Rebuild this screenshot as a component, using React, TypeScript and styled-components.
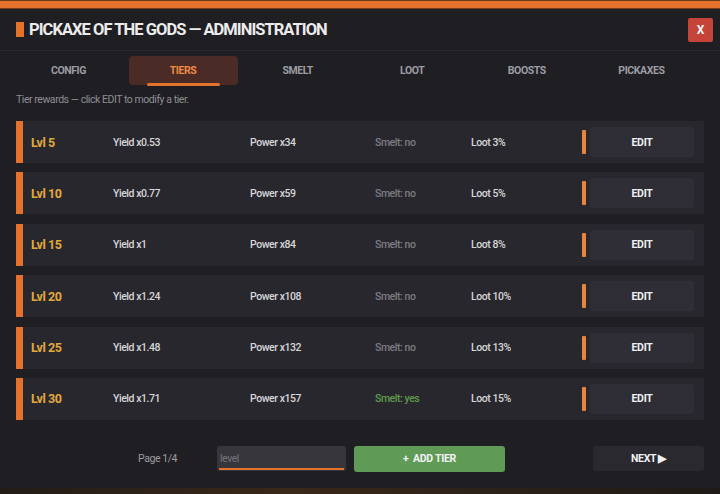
import React, { useState } from 'react';
import styled, { createGlobalStyle } from 'styled-components';

const GlobalStyle = createGlobalStyle`
  html, body {
    margin: 0;
    padding: 0;
    background: #2a2119;
  }
  body {
    font-family: Roboto, "Liberation Sans", sans-serif;
    letter-spacing: -0.45px;
    -webkit-font-smoothing: antialiased;
  }
`;

const ORANGE = '#e2722c';

const Modal = styled.div`
  width: 720px;
  height: 488px;
  background-color: #1f1e23;
  display: flex;
  flex-direction: column;
  overflow: hidden;
`;

const TopBar = styled.div`
  height: 9px;
  background-color: ${ORANGE};
  box-shadow: inset 0 1px 0 #6b3a1c, inset 0 -1px 0 #7a3d18;
`;

const Header = styled.div`
  height: 41px;
  display: flex;
  align-items: center;
  justify-content: space-between;
  padding: 0 7px 0 16px;
  border-bottom: 1px solid #2c2b31;
`;

const Title = styled.h1`
  margin: 0;
  display: flex;
  align-items: center;
  gap: 5px;
  font-size: 16.5px;
  font-weight: 700;
  color: #ececec;
  letter-spacing: -0.95px;
  &::before {
    content: '';
    width: 8px;
    height: 15px;
    background-color: ${ORANGE};
  }
`;

const CloseButton = styled.button`
  width: 25px;
  height: 24px;
  border: none;
  border-radius: 2px;
  background-color: #c4443a;
  color: #f4f4f4;
  font-family: inherit;
  font-size: 12px;
  font-weight: 700;
  padding: 0;
  cursor: pointer;
`;

const Tabs = styled.nav`
  display: flex;
  gap: 5.6px;
  padding: 0 24px 0 14px;
  margin-top: 5px;
  height: 29px;
`;

const Tab = styled.button<{ $active?: boolean }>`
  flex: 1;
  position: relative;
  border: none;
  border-radius: 4px;
  background-color: ${(p) => (p.$active ? '#4a2b25' : 'transparent')};
  color: ${(p) => (p.$active ? '#ee8a45' : '#9c9ca2')};
  font-family: inherit;
  font-size: 10.5px;
  font-weight: 700;
  letter-spacing: -0.4px;
  padding: 0;
  cursor: pointer;
  &::after {
    content: '';
    display: ${(p) => (p.$active ? 'block' : 'none')};
    position: absolute;
    left: 50%;
    bottom: -1px;
    width: 73px;
    height: 3px;
    margin-left: -36.5px;
    border-radius: 2px;
    background-color: ${ORANGE};
  }
`;

const Hint = styled.p`
  margin: 8px 0 0 16px;
  line-height: 14px;
  font-size: 10.5px;
  color: #8e8e94;
`;

const TierList = styled.div`
  margin-top: 14px;
  display: flex;
  flex-direction: column;
  gap: 9.4px;
  padding: 0 16px;
`;

const TierRow = styled.div`
  height: 42px;
  display: grid;
  grid-template-columns: 82px 137px 125px 96px 1fr 8px 104px;
  align-items: center;
  padding: 0 10px 0 8px;
  background-color: #28272d;
  border-left: 7px solid ${ORANGE};
  box-sizing: border-box;
  font-size: 10.5px;
  font-weight: 500;
  color: #d6d6d8;
`;

const Level = styled.span`
  font-size: 12.5px;
  font-weight: 700;
  color: #e2a83e;
`;

const Cell = styled.span``;

const SmeltCell = styled.span<{ $yes: boolean }>`
  color: ${(p) => (p.$yes ? '#5e9b4c' : '#7c7c82')};
`;

const EditMark = styled.span`
  width: 3.5px;
  height: 24px;
  border-radius: 1px;
  background-color: #e8843c;
`;

const EditButton = styled.button`
  width: 104px;
  height: 30px;
  border: none;
  border-radius: 3px;
  background-color: #2f2e36;
  color: #f0f0f0;
  font-family: inherit;
  font-size: 10.5px;
  font-weight: 700;
  letter-spacing: -0.3px;
  cursor: pointer;
`;

const Footer = styled.div`
  margin-top: 26px;
  display: flex;
  align-items: center;
  padding: 0 16px;
  height: 26px;
`;

const PageLabel = styled.span`
  width: 161px;
  text-align: right;
  font-size: 10.5px;
  color: #9c9ca2;
`;

const LevelInput = styled.input`
  margin-left: 40px;
  width: 129px;
  height: 25px;
  box-sizing: border-box;
  border: none;
  border-radius: 3px;
  padding: 0 4px 0 3px;
  background-color: #37363d;
  background-image: linear-gradient(${ORANGE}, ${ORANGE});
  background-repeat: no-repeat;
  background-size: calc(100% - 4px) 2px;
  background-position: 2px calc(100% - 1px);
  color: #dddddd;
  font-family: inherit;
  font-size: 10.5px;
  letter-spacing: -0.45px;
  outline: none;
  &::placeholder {
    color: #75757b;
  }
`;

const AddButton = styled.button`
  margin-left: 8px;
  width: 151px;
  height: 26px;
  border: none;
  border-radius: 3px;
  background-color: #5f9b57;
  color: #f2f2f2;
  font-family: inherit;
  font-size: 10.5px;
  font-weight: 700;
  letter-spacing: -0.3px;
  cursor: pointer;
`;

const NextButton = styled.button`
  margin-left: auto;
  width: 111px;
  height: 25px;
  border: none;
  border-radius: 3px;
  background-color: #2a2930;
  color: #f0f0f0;
  font-family: inherit;
  font-size: 10.5px;
  font-weight: 700;
  letter-spacing: -0.3px;
  cursor: pointer;
`;

const Backdrop = styled.div`
  height: 6px;
  background: linear-gradient(90deg, #221c17, #3a2818 40%, #2b2118 70%, #1f1a16);
`;

const tabs = ['CONFIG', 'TIERS', 'SMELT', 'LOOT', 'BOOSTS', 'PICKAXES'];

const tiers = [
  { lvl: 5, yieldX: '0.53', power: 34, smelt: false, loot: 3 },
  { lvl: 10, yieldX: '0.77', power: 59, smelt: false, loot: 5 },
  { lvl: 15, yieldX: '1', power: 84, smelt: false, loot: 8 },
  { lvl: 20, yieldX: '1.24', power: 108, smelt: false, loot: 10 },
  { lvl: 25, yieldX: '1.48', power: 132, smelt: false, loot: 13 },
  { lvl: 30, yieldX: '1.71', power: 157, smelt: true, loot: 15 },
];

const App = () => {
  const [activeTab, setActiveTab] = useState('TIERS');
  const [level, setLevel] = useState('');

  return (
    <>
      <GlobalStyle />
      <Modal>
        <TopBar />
        <Header>
          <Title>PICKAXE OF THE GODS — ADMINISTRATION</Title>
          <CloseButton>X</CloseButton>
        </Header>
        <Tabs>
          {tabs.map((t) => (
            <Tab key={t} $active={t === activeTab} onClick={() => setActiveTab(t)}>
              {t}
            </Tab>
          ))}
        </Tabs>
        <Hint>Tier rewards — click EDIT to modify a tier.</Hint>
        <TierList>
          {tiers.map((tier) => (
            <TierRow key={tier.lvl}>
              <Level>Lvl {tier.lvl}</Level>
              <Cell>Yield x{tier.yieldX}</Cell>
              <Cell>Power x{tier.power}</Cell>
              <SmeltCell $yes={tier.smelt}>Smelt: {tier.smelt ? 'yes' : 'no'}</SmeltCell>
              <Cell>Loot {tier.loot}%</Cell>
              <EditMark />
              <EditButton>EDIT</EditButton>
            </TierRow>
          ))}
        </TierList>
        <Footer>
          <PageLabel>Page 1/4</PageLabel>
          <LevelInput placeholder="level" value={level} onChange={(e) => setLevel(e.target.value)} />
          <AddButton>+&nbsp; ADD TIER</AddButton>
          <NextButton>NEXT ▶</NextButton>
        </Footer>
      </Modal>
      <Backdrop />
    </>
  );
};

export default App;
